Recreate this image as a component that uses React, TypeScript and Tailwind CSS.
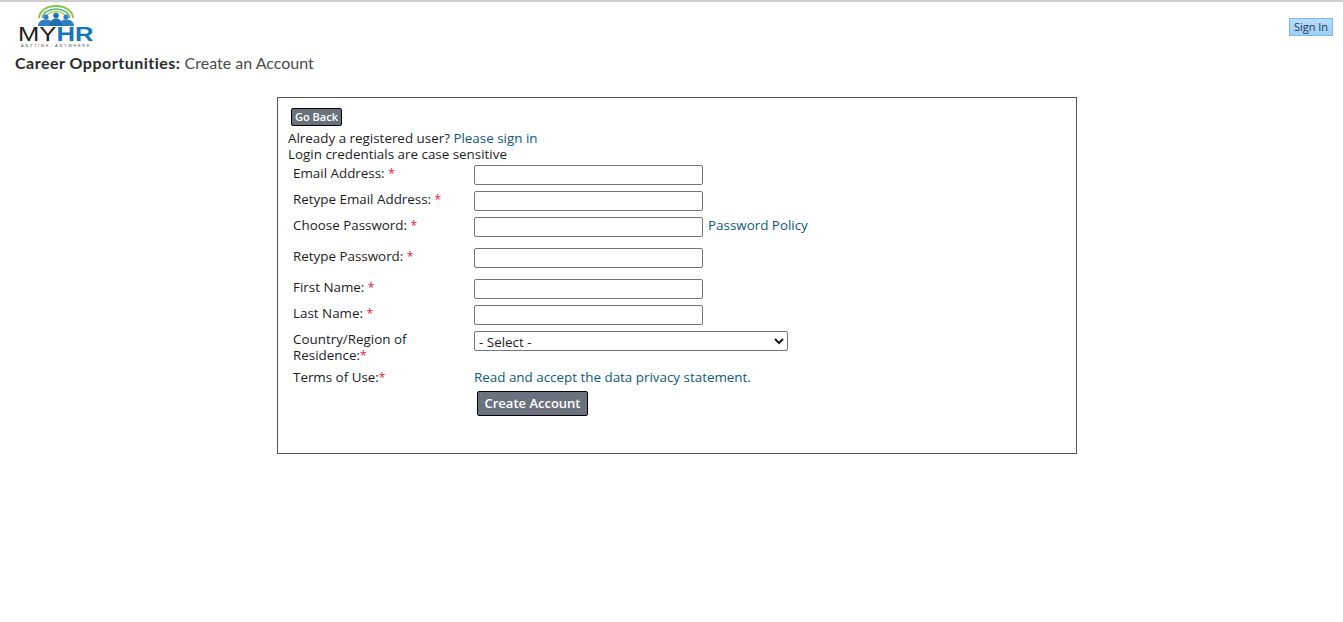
const labelClass = 'w-[186px] shrink-0 pl-[5px] text-[13.4px] leading-[16px] text-[#1d1d1d]';
const inputClass = 'block h-5 w-[229px] rounded-[2px] border border-[#767676] bg-white';
const linkClass = 'text-[13.4px] leading-[16px] text-[#0f5a7a]';
const starClass = 'text-[12px] text-[#e5213a]';

function Logo() {
  return (
    <div className="ml-[1px] flex w-[76px] flex-col items-center">
      <svg width="38" height="22" viewBox="0 0 38 22" fill="none">
        <path d="M2 13a17 12 0 0 1 34 0" stroke="#8cc63f" strokeWidth="2" />
        <path d="M5.500 13a13.500 9 0 0 1 27 0" stroke="#4fb58a" strokeWidth="1.6" />
        <path d="M9 13a10 6.500 0 0 1 20 0" stroke="#a4d65e" strokeWidth="1.4" />
        <circle cx="9" cy="12" r="2.600" fill="#2f7fc1" />
        <circle cx="29" cy="12" r="2.600" fill="#2f7fc1" />
        <circle cx="19" cy="10.500" r="2.800" fill="#1f6fb2" />
        <path d="M1 21c0-4 3-6.500 8-6.500s6 2 6 6.500zM23 21c0-4 1-6.500 6-6.500s8 2.500 8 6.500z" fill="#2f7fc1" />
        <path d="M13 21c0-5 2-7.500 6-7.500s6 2.500 6 7.500z" fill="#1f6fb2" />
      </svg>
      <div className="flex w-full origin-left scale-x-[1.28] text-[20px] leading-[15px] font-['Liberation_Sans',sans-serif]">
        <span className="text-[#222222]">MY</span>
        <span className="font-bold text-[#1477b8]">HR</span>
      </div>
      <div className="mt-[1px] whitespace-nowrap text-[4px] leading-[5px] tracking-[1.6px] text-[#555555] font-['Liberation_Sans',sans-serif]">
        ANYTIME, ANYWHERE
      </div>
    </div>
  );
}

function Row({ label, h, children }: { label: string; h: string; children: React.ReactNode }) {
  return (
    <div className={`flex items-start ${h}`}>
      <div className={labelClass}>
        {label} <span className={starClass}>*</span>
      </div>
      {children}
    </div>
  );
}

export default function App() {
  return (
    <div className="min-h-[622px] bg-white border-t-2 border-[#cfcfcf] font-['Open_Sans',sans-serif]">
      <div className="flex items-start justify-between pl-[17px] pr-[10px] pt-[3px]">
        <Logo />
        <button className="mt-[13px] h-[18px] w-[44px] border border-[#7fb9ea] bg-linear-to-b from-[#b7ddfb] to-[#9ccff8] text-[11px] leading-[14px] text-[#26384a]">
          Sign In
        </button>
      </div>
      <h1 className="mt-[6px] pl-[15px] text-[16px] leading-[18px] text-[#4a4a4a] font-['Lato',sans-serif]">
        <span className="font-bold tracking-[0.5px] text-[#2b2b2b]">Career Opportunities:</span> Create an Account
      </h1>

      <div className="ml-[277px] mt-[25px] h-[357px] w-[800px] border border-[#555555] pl-[10px] pt-[10px]">
        <button className="ml-[3px] block h-[18px] w-[51px] rounded-[2px] border border-black bg-[#6a737d] text-[11px] leading-[14px] font-semibold text-white">
          Go Back
        </button>
        <p className="mt-[4px] text-[13.4px] leading-[16px] text-[#1d1d1d]">
          Already a registered user? <a className={linkClass}>Please sign in</a>
        </p>
        <p className="text-[13.4px] leading-[16px] text-[#1d1d1d]">Login credentials are case sensitive</p>

        <div className="mt-[3px]">
          <Row label="Email Address:" h="h-[26px]">
            <div className={inputClass} />
          </Row>
          <Row label="Retype Email Address:" h="h-[26px]">
            <div className={inputClass} />
          </Row>
          <Row label="Choose Password:" h="h-[31px]">
            <div className={inputClass} />
            <a className={`${linkClass} ml-[5px]`}>Password Policy</a>
          </Row>
          <Row label="Retype Password:" h="h-[31px]">
            <div className={inputClass} />
          </Row>
          <Row label="First Name:" h="h-[26px]">
            <div className={inputClass} />
          </Row>
          <Row label="Last Name:" h="h-[26px]">
            <div className={inputClass} />
          </Row>
          <div className="flex h-[38px] items-start">
            <div className={`${labelClass} pr-[45px]`}>
              Country/Region of Residence:<span className={starClass}>*</span>
            </div>
            <select className="h-5 w-[314px] rounded-[2px] border border-[#767676] bg-white pb-[3px] text-[13.4px] leading-[16px] text-[#1d1d1d]">
              <option>- Select -</option>
            </select>
          </div>
          <div className="flex h-[22px] items-start">
            <div className={labelClass}>
              Terms of Use:<span className={starClass}>*</span>
            </div>
            <a className={linkClass}>Read and accept the data privacy statement.</a>
          </div>
          <button className="ml-[189px] block h-[25px] w-[111px] rounded-[2px] border border-black bg-[#6a737d] pb-[2px] text-[13px] leading-[16px] font-semibold text-white">
            Create Account
          </button>
        </div>
      </div>
    </div>
  );
}
